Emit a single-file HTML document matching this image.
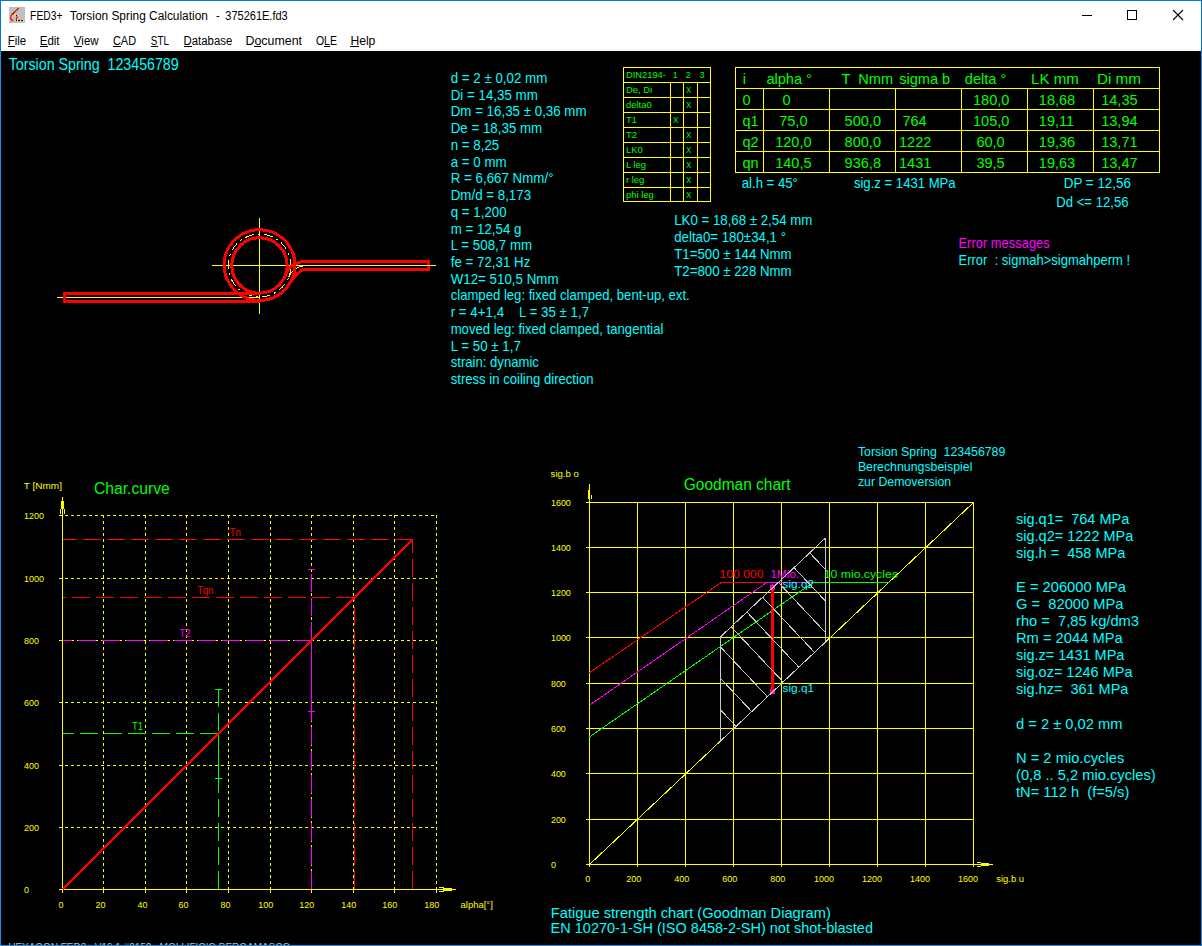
<!DOCTYPE html>
<html lang="en"><head><meta charset="utf-8"><title>FED3+ Torsion Spring Calculation - 375261E.fd3</title>
<style>
html,body{margin:0;padding:0;background:#000;overflow:hidden}
body{width:1202px;height:946px;font-family:"Liberation Sans",sans-serif}
svg{display:block}
text{white-space:pre}
</style></head><body>
<svg width="1202" height="946" viewBox="0 0 1202 946">
<rect x="0" y="0" width="1202" height="946" fill="#1e90ea"/>
<rect x="0" y="0" width="1202" height="51" fill="#0078d7"/>
<rect x="1" y="1" width="1200" height="50" fill="#ffffff"/>
<rect x="1" y="49" width="1200" height="1" fill="#f0f0f0"/>
<rect x="1" y="51" width="1200" height="894" fill="#000000"/>
<g id="appicon">
<rect x="9" y="7" width="16" height="16" fill="#c0c0c0"/>
<path d="M18.8 8 L11.9 14.4 Q10 16.6 10.7 18.6 Q11.7 20.6 13.4 20.5 M16 19.6 Q17.6 17.8 16.9 16.2" fill="none" stroke="#ff0000" stroke-width="1.3"/>
<g shape-rendering="crispEdges"><rect x="13" y="13" width="1" height="1" fill="#000"/><rect x="14" y="14" width="2" height="1" fill="#ffff00"/><rect x="16" y="15" width="1" height="1" fill="#000"/>
<rect x="14" y="20" width="1" height="1" fill="#ffff00"/>
<rect x="15" y="20" width="1" height="1" fill="#ffff00"/>
<rect x="16" y="20" width="1" height="1" fill="#000"/>
<rect x="17" y="20" width="1" height="1" fill="#ffff00"/>
<rect x="18" y="20" width="1" height="1" fill="#000"/>
<rect x="19" y="20" width="1" height="1" fill="#000"/>
<rect x="20" y="20" width="1" height="1" fill="#ffff00"/>
<rect x="21" y="20" width="1" height="1" fill="#000"/>
<rect x="22" y="20" width="1" height="1" fill="#000"/>
<rect x="23" y="20" width="1" height="1" fill="#ffff00"/>
</g>
</g>
<g font-family="'Liberation Sans', sans-serif" fill="#000">
<text x="30.1" y="19.6" font-size="12" textLength="32.30" lengthAdjust="spacingAndGlyphs">FED3+</text>
<text x="69.8" y="19.6" font-size="12" textLength="138.10" lengthAdjust="spacingAndGlyphs">Torsion Spring Calculation</text>
<text x="216" y="19.6" font-size="12" textLength="3.60" lengthAdjust="spacingAndGlyphs">-</text>
<text x="225.3" y="19.6" font-size="12" textLength="62.40" lengthAdjust="spacingAndGlyphs">375261E.fd3</text>
<text x="7.7" y="44.5" font-size="12" textLength="18.40" lengthAdjust="spacingAndGlyphs">File</text>
<rect x="8" y="46" width="7" height="1" fill="#000"/>
<text x="39.7" y="44.5" font-size="12" textLength="19.90" lengthAdjust="spacingAndGlyphs">Edit</text>
<rect x="40" y="46" width="8" height="1" fill="#000"/>
<text x="73.8" y="44.5" font-size="12" textLength="24.90" lengthAdjust="spacingAndGlyphs">View</text>
<rect x="74" y="46" width="8" height="1" fill="#000"/>
<text x="112.9" y="44.5" font-size="12" textLength="23.20" lengthAdjust="spacingAndGlyphs">CAD</text>
<rect x="113" y="46" width="8" height="1" fill="#000"/>
<text x="150.8" y="44.5" font-size="12" textLength="18.10" lengthAdjust="spacingAndGlyphs">STL</text>
<rect x="151" y="46" width="7" height="1" fill="#000"/>
<text x="183.6" y="44.5" font-size="12" textLength="48.60" lengthAdjust="spacingAndGlyphs">Database</text>
<rect x="184" y="46" width="8" height="1" fill="#000"/>
<text x="245.5" y="44.5" font-size="12" textLength="56.50" lengthAdjust="spacingAndGlyphs">Document</text>
<rect x="254" y="46" width="7" height="1" fill="#000"/>
<text x="315.9" y="44.5" font-size="12" textLength="21.10" lengthAdjust="spacingAndGlyphs">OLE</text>
<rect x="324" y="46" width="6" height="1" fill="#000"/>
<text x="350.4" y="44.5" font-size="12" textLength="25.00" lengthAdjust="spacingAndGlyphs">Help</text>
<rect x="350" y="46" width="9" height="1" fill="#000"/>
</g>
<g shape-rendering="crispEdges" stroke="#000" stroke-width="1" fill="none">
<path d="M1082 15.5H1092"/>
<rect x="1127.5" y="10.5" width="9" height="9"/>
</g>
<path d="M1173 10L1183 20M1183 10L1173 20" stroke="#000" stroke-width="1.1" fill="none"/>
<g shape-rendering="crispEdges">
<rect x="623" y="67" width="88" height="1" fill="#ffff00"/>
<rect x="623" y="82" width="88" height="1" fill="#ffff00"/>
<rect x="623" y="97" width="88" height="1" fill="#ffff00"/>
<rect x="623" y="112" width="88" height="1" fill="#ffff00"/>
<rect x="623" y="127" width="88" height="1" fill="#ffff00"/>
<rect x="623" y="142" width="88" height="1" fill="#ffff00"/>
<rect x="623" y="157" width="88" height="1" fill="#ffff00"/>
<rect x="623" y="172" width="88" height="1" fill="#ffff00"/>
<rect x="623" y="187" width="88" height="1" fill="#ffff00"/>
<rect x="623" y="201" width="88" height="1" fill="#ffff00"/>
<rect x="623" y="67" width="1" height="135" fill="#ffff00"/>
<rect x="710" y="67" width="1" height="135" fill="#ffff00"/>
<rect x="670" y="82" width="1" height="120" fill="#ffff00"/>
<rect x="683" y="82" width="1" height="120" fill="#ffff00"/>
<rect x="697" y="82" width="1" height="120" fill="#ffff00"/>
<rect x="735" y="67" width="425" height="1" fill="#ffff00"/>
<rect x="735" y="88" width="425" height="1" fill="#ffff00"/>
<rect x="735" y="109" width="425" height="1" fill="#ffff00"/>
<rect x="735" y="130" width="425" height="1" fill="#ffff00"/>
<rect x="735" y="151" width="425" height="1" fill="#ffff00"/>
<rect x="735" y="172" width="425" height="1" fill="#ffff00"/>
<rect x="735" y="67" width="1" height="106" fill="#ffff00"/>
<rect x="1159" y="67" width="1" height="106" fill="#ffff00"/>
<rect x="763" y="88" width="1" height="85" fill="#ffff00"/>
<rect x="829" y="88" width="1" height="85" fill="#ffff00"/>
<rect x="895" y="88" width="1" height="85" fill="#ffff00"/>
<rect x="961" y="88" width="1" height="85" fill="#ffff00"/>
<rect x="1027" y="88" width="1" height="85" fill="#ffff00"/>
<rect x="1093" y="88" width="1" height="85" fill="#ffff00"/>
<line x1="103.5" y1="515" x2="103.5" y2="889" stroke="#ffff00" stroke-width="1" stroke-dasharray="3 3"/>
<rect x="103" y="890" width="1" height="3" fill="#ffff00"/>
<line x1="145.5" y1="515" x2="145.5" y2="889" stroke="#ffff00" stroke-width="1" stroke-dasharray="3 3"/>
<rect x="145" y="890" width="1" height="3" fill="#ffff00"/>
<line x1="186.5" y1="515" x2="186.5" y2="889" stroke="#ffff00" stroke-width="1" stroke-dasharray="3 3"/>
<rect x="186" y="890" width="1" height="3" fill="#ffff00"/>
<line x1="228.5" y1="515" x2="228.5" y2="889" stroke="#ffff00" stroke-width="1" stroke-dasharray="3 3"/>
<rect x="228" y="890" width="1" height="3" fill="#ffff00"/>
<line x1="270.5" y1="515" x2="270.5" y2="889" stroke="#ffff00" stroke-width="1" stroke-dasharray="3 3"/>
<rect x="270" y="890" width="1" height="3" fill="#ffff00"/>
<line x1="311.5" y1="515" x2="311.5" y2="889" stroke="#ffff00" stroke-width="1" stroke-dasharray="3 3"/>
<rect x="311" y="890" width="1" height="3" fill="#ffff00"/>
<line x1="353.5" y1="515" x2="353.5" y2="889" stroke="#ffff00" stroke-width="1" stroke-dasharray="3 3"/>
<rect x="353" y="890" width="1" height="3" fill="#ffff00"/>
<line x1="394.5" y1="515" x2="394.5" y2="889" stroke="#ffff00" stroke-width="1" stroke-dasharray="3 3"/>
<rect x="394" y="890" width="1" height="3" fill="#ffff00"/>
<line x1="436.5" y1="515" x2="436.5" y2="889" stroke="#ffff00" stroke-width="1" stroke-dasharray="3 3"/>
<rect x="436" y="890" width="1" height="3" fill="#ffff00"/>
<line x1="59" y1="827.5" x2="437" y2="827.5" stroke="#ffff00" stroke-width="1" stroke-dasharray="3 3"/>
<rect x="59" y="827" width="3" height="1" fill="#ffff00"/>
<line x1="59" y1="765.5" x2="437" y2="765.5" stroke="#ffff00" stroke-width="1" stroke-dasharray="3 3"/>
<rect x="59" y="765" width="3" height="1" fill="#ffff00"/>
<line x1="59" y1="702.5" x2="437" y2="702.5" stroke="#ffff00" stroke-width="1" stroke-dasharray="3 3"/>
<rect x="59" y="702" width="3" height="1" fill="#ffff00"/>
<line x1="59" y1="640.5" x2="437" y2="640.5" stroke="#ffff00" stroke-width="1" stroke-dasharray="3 3"/>
<rect x="59" y="640" width="3" height="1" fill="#ffff00"/>
<line x1="59" y1="578.5" x2="437" y2="578.5" stroke="#ffff00" stroke-width="1" stroke-dasharray="3 3"/>
<rect x="59" y="578" width="3" height="1" fill="#ffff00"/>
<line x1="59" y1="515.5" x2="437" y2="515.5" stroke="#ffff00" stroke-width="1" stroke-dasharray="3 3"/>
<rect x="59" y="515" width="3" height="1" fill="#ffff00"/>
<rect x="62" y="497" width="1" height="393" fill="#ffff00"/>
<rect x="59" y="889" width="397" height="1" fill="#ffff00"/>
<rect x="62" y="889" width="1" height="4" fill="#ffff00"/>
<rect x="61" y="501" width="3" height="8" fill="#ffff00"/>
<rect x="60" y="509" width="1" height="5" fill="#ffff00"/>
<rect x="64" y="509" width="1" height="5" fill="#ffff00"/>
<rect x="443" y="888" width="9" height="3" fill="#ffff00"/>
<rect x="439" y="887" width="5" height="1" fill="#ffff00"/>
<rect x="439" y="891" width="5" height="1" fill="#ffff00"/>
</g>
<g shape-rendering="crispEdges">
<line x1="412.813" y1="539.187" x2="63" y2="539.187" stroke="#ff0000" stroke-width="1" stroke-dasharray="18 6"/>
<line x1="412.813" y1="889" x2="412.813" y2="539.187" stroke="#ff0000" stroke-width="1" stroke-dasharray="18 6"/>
<line x1="354.428" y1="597.531" x2="63" y2="597.531" stroke="#ff0000" stroke-width="1" stroke-dasharray="18 6"/>
<line x1="354.5" y1="889" x2="354.5" y2="597.531" stroke="#ff0000" stroke-width="1" stroke-dasharray="18 6"/>
<line x1="311.833" y1="640.167" x2="63" y2="640.167" stroke="#ff00ff" stroke-width="1" stroke-dasharray="18 6"/>
<line x1="311.5" y1="889" x2="311.5" y2="640.167" stroke="#ff00ff" stroke-width="1" stroke-dasharray="18 6"/>
<line x1="311.5" y1="640.167" x2="311.5" y2="569.107" stroke="#ff00ff" stroke-width="1" stroke-dasharray="18 6"/>
<line x1="311.5" y1="640.167" x2="311.5" y2="711.227" stroke="#ff00ff" stroke-width="1" stroke-dasharray="18 6"/>
<rect x="308" y="569" width="7" height="1" fill="#ff00ff"/>
<rect x="308" y="711" width="7" height="1" fill="#ff00ff"/>
<line x1="218.333" y1="733.667" x2="63" y2="733.667" stroke="#00ff00" stroke-width="1" stroke-dasharray="18 6"/>
<line x1="218.5" y1="889" x2="218.5" y2="733.667" stroke="#00ff00" stroke-width="1" stroke-dasharray="18 6"/>
<line x1="218.5" y1="689.4" x2="218.5" y2="778.4" stroke="#00ff00" stroke-width="1" stroke-dasharray="18 6"/>
<rect x="215" y="689" width="7" height="1" fill="#00ff00"/>
<rect x="215" y="778" width="7" height="1" fill="#00ff00"/>
<line x1="62.5" y1="889.5" x2="412.813" y2="539.187" stroke="#ff0000" stroke-width="2.7"/>
</g>
<g shape-rendering="crispEdges">
<rect x="637" y="502" width="1" height="365" fill="#ffff00"/>
<rect x="685" y="502" width="1" height="365" fill="#ffff00"/>
<rect x="733" y="502" width="1" height="365" fill="#ffff00"/>
<rect x="781" y="502" width="1" height="365" fill="#ffff00"/>
<rect x="829" y="502" width="1" height="365" fill="#ffff00"/>
<rect x="877" y="502" width="1" height="365" fill="#ffff00"/>
<rect x="925" y="502" width="1" height="365" fill="#ffff00"/>
<rect x="973" y="502" width="1" height="365" fill="#ffff00"/>
<rect x="586" y="819" width="388" height="1" fill="#ffff00"/>
<rect x="586" y="773" width="388" height="1" fill="#ffff00"/>
<rect x="586" y="728" width="388" height="1" fill="#ffff00"/>
<rect x="586" y="683" width="388" height="1" fill="#ffff00"/>
<rect x="586" y="637" width="388" height="1" fill="#ffff00"/>
<rect x="586" y="592" width="388" height="1" fill="#ffff00"/>
<rect x="586" y="547" width="388" height="1" fill="#ffff00"/>
<rect x="586" y="502" width="388" height="1" fill="#ffff00"/>
<rect x="589" y="484" width="1" height="383" fill="#ffff00"/>
<rect x="586" y="864" width="407" height="1" fill="#ffff00"/>
<rect x="588" y="490" width="2" height="9" fill="#ffff00"/>
<rect x="591" y="495" width="1" height="4" fill="#ffff00"/>
<rect x="981" y="863" width="8" height="3" fill="#ffff00"/>
<rect x="977" y="862" width="4" height="1" fill="#ffff00"/>
<rect x="977" y="866" width="4" height="1" fill="#ffff00"/>
<line x1="589.5" y1="864.5" x2="973.5" y2="502.5" stroke="#ffff00" stroke-width="1"/>
<line x1="589.5" y1="672.7" x2="721" y2="582.592" stroke="#ff0000" stroke-width="1"/>
<line x1="721" y1="582.592" x2="766.6" y2="582.592" stroke="#ff0000" stroke-width="1"/>
<line x1="589.5" y1="705.2" x2="766.6" y2="582.592" stroke="#ff00ff" stroke-width="1"/>
<line x1="766.6" y1="582.592" x2="813" y2="582.592" stroke="#ff00ff" stroke-width="1"/>
<line x1="589.5" y1="736.9" x2="813" y2="582.592" stroke="#00ff00" stroke-width="1"/>
<line x1="813" y1="582.592" x2="888.54" y2="582.592" stroke="#00ff00" stroke-width="1"/>
</g>
<g fill="none" shape-rendering="crispEdges">
<path d="M212 265.5H436 M259.5 218V314" stroke="#ffff00" stroke-width="1"/>
<path d="M57 297.5H259.5" stroke="#ffff00" stroke-width="1"/>
<circle cx="259.5" cy="265.5" r="31.4" stroke="#ffff00" stroke-width="1" stroke-dasharray="9 4 2 4"/>
<path d="M306.2 265.5 A19.0 19.0 0 0 0 288.6 277.3" stroke="#ffff00" stroke-width="1"/>
<g stroke="#ff0000" stroke-width="3" stroke-linejoin="round">
<circle cx="259.5" cy="265.1" r="35.400000000000006"/>
<circle cx="259.5" cy="265.5" r="27.7"/>
<path d="M259.5 293.5H64.5V301.5H259.5"/>
<path d="M285.8 274.1 C288.3 266.5 297.5 261.5 303.6 261.5 H428.5 V269.5 H305 C299 269.5 292.8 278.5 289 284.4"/>
</g>
<path d="M300.2 265.5H436" stroke="#ffff00" stroke-width="1"/>
</g>
<g font-family="'Liberation Sans', sans-serif" style="white-space:pre">
<text x="8.7" y="70" font-size="16.5" fill="#00ffff" textLength="170.01" lengthAdjust="spacingAndGlyphs">Torsion Spring  123456789</text>
<text x="450.7" y="83" font-size="15" fill="#00ffff" textLength="96.63" lengthAdjust="spacingAndGlyphs">d = 2 ± 0,02 mm</text>
<text x="450.7" y="99.73" font-size="15" fill="#00ffff" textLength="87.08" lengthAdjust="spacingAndGlyphs">Di = 14,35 mm</text>
<text x="450.7" y="116.46" font-size="15" fill="#00ffff" textLength="135.91" lengthAdjust="spacingAndGlyphs">Dm = 16,35 ± 0,36 mm</text>
<text x="450.7" y="133.19" font-size="15" fill="#00ffff" textLength="91.54" lengthAdjust="spacingAndGlyphs">De = 18,35 mm</text>
<text x="450.7" y="149.92" font-size="15" fill="#00ffff" textLength="48.57" lengthAdjust="spacingAndGlyphs">n = 8,25</text>
<text x="450.7" y="166.65" font-size="15" fill="#00ffff" textLength="55.95" lengthAdjust="spacingAndGlyphs">a = 0 mm</text>
<text x="450.7" y="183.38" font-size="15" fill="#00ffff" textLength="102.79" lengthAdjust="spacingAndGlyphs">R = 6,667 Nmm/°</text>
<text x="450.7" y="200.11" font-size="15" fill="#00ffff" textLength="80.43" lengthAdjust="spacingAndGlyphs">Dm/d = 8,173</text>
<text x="450.7" y="216.84" font-size="15" fill="#00ffff" textLength="55.98" lengthAdjust="spacingAndGlyphs">q = 1,200</text>
<text x="450.7" y="233.57" font-size="15" fill="#00ffff" textLength="70.80" lengthAdjust="spacingAndGlyphs">m = 12,54 g</text>
<text x="450.7" y="250.3" font-size="15" fill="#00ffff" textLength="81.41" lengthAdjust="spacingAndGlyphs">L = 508,7 mm</text>
<text x="450.7" y="267.03" font-size="15" fill="#00ffff" textLength="79.69" lengthAdjust="spacingAndGlyphs">fe = 72,31 Hz</text>
<text x="450.7" y="283.76" font-size="15" fill="#00ffff" textLength="107.83" lengthAdjust="spacingAndGlyphs">W12= 510,5 Nmm</text>
<text x="450.7" y="300.49" font-size="15" fill="#00ffff" textLength="239.03" lengthAdjust="spacingAndGlyphs">clamped leg: fixed clamped, bent-up, ext.</text>
<text x="450.7" y="317.22" font-size="15" fill="#00ffff" textLength="138.42" lengthAdjust="spacingAndGlyphs">r = 4+1,4    L = 35 ± 1,7</text>
<text x="450.7" y="333.95" font-size="15" fill="#00ffff" textLength="212.80" lengthAdjust="spacingAndGlyphs">moved leg: fixed clamped, tangential</text>
<text x="450.7" y="350.68" font-size="15" fill="#00ffff" textLength="70.22" lengthAdjust="spacingAndGlyphs">L = 50 ± 1,7</text>
<text x="450.7" y="367.41" font-size="15" fill="#00ffff" textLength="88.16" lengthAdjust="spacingAndGlyphs">strain: dynamic</text>
<text x="450.7" y="384.14" font-size="15" fill="#00ffff" textLength="142.82" lengthAdjust="spacingAndGlyphs">stress in coiling direction</text>
<text x="674.2" y="224.7" font-size="15" fill="#00ffff" textLength="138.12" lengthAdjust="spacingAndGlyphs">LK0 = 18,68 ± 2,54 mm</text>
<text x="674.2" y="241.7" font-size="15" fill="#00ffff" textLength="111.75" lengthAdjust="spacingAndGlyphs">delta0= 180±34,1 °</text>
<text x="674.2" y="258.7" font-size="15" fill="#00ffff" textLength="117.46" lengthAdjust="spacingAndGlyphs">T1=500 ± 144 Nmm</text>
<text x="674.2" y="275.7" font-size="15" fill="#00ffff" textLength="117.46" lengthAdjust="spacingAndGlyphs">T2=800 ± 228 Nmm</text>
<text x="741.8" y="187.5" font-size="15" fill="#00ffff" textLength="55.97" lengthAdjust="spacingAndGlyphs">al.h = 45°</text>
<text x="853.9" y="187.5" font-size="15" fill="#00ffff" textLength="101.78" lengthAdjust="spacingAndGlyphs">sig.z = 1431 MPa</text>
<text x="1063.7" y="188" font-size="15" fill="#00ffff" textLength="67.30" lengthAdjust="spacingAndGlyphs">DP = 12,56</text>
<text x="1056.2" y="207" font-size="15" fill="#00ffff" textLength="72.49" lengthAdjust="spacingAndGlyphs">Dd &lt;= 12,56</text>
<text x="958.5" y="248" font-size="15" fill="#ff00ff" textLength="91.26" lengthAdjust="spacingAndGlyphs">Error messages</text>
<text x="958.5" y="264.8" font-size="15" fill="#00ffff" textLength="171.65" lengthAdjust="spacingAndGlyphs">Error  : sigmah&gt;sigmahperm !</text>
<text x="626" y="77.8" font-size="9.6" fill="#00ff00" textLength="39.85" lengthAdjust="spacingAndGlyphs">DIN2194-</text>
<text x="672.8" y="77.8" font-size="9.6" fill="#00ff00" textLength="4.81" lengthAdjust="spacingAndGlyphs">1</text>
<text x="685.7" y="77.8" font-size="9.6" fill="#00ff00" textLength="4.81" lengthAdjust="spacingAndGlyphs">2</text>
<text x="699.7" y="77.8" font-size="9.6" fill="#00ff00" textLength="4.81" lengthAdjust="spacingAndGlyphs">3</text>
<text x="626" y="92.8" font-size="9.6" fill="#00ff00" textLength="26.14" lengthAdjust="spacingAndGlyphs">De, Di</text>
<text x="685.9" y="92.8" font-size="9.9" fill="#00ff00" textLength="5.28" lengthAdjust="spacingAndGlyphs">X</text>
<text x="626" y="107.8" font-size="9.6" fill="#00ff00" textLength="25.63" lengthAdjust="spacingAndGlyphs">delta0</text>
<text x="685.9" y="107.8" font-size="9.9" fill="#00ff00" textLength="5.28" lengthAdjust="spacingAndGlyphs">X</text>
<text x="626" y="122.8" font-size="9.6" fill="#00ff00" textLength="10.98" lengthAdjust="spacingAndGlyphs">T1</text>
<text x="672.9" y="122.8" font-size="9.9" fill="#00ff00" textLength="5.28" lengthAdjust="spacingAndGlyphs">X</text>
<text x="626" y="137.8" font-size="9.6" fill="#00ff00" textLength="10.98" lengthAdjust="spacingAndGlyphs">T2</text>
<text x="685.9" y="137.8" font-size="9.9" fill="#00ff00" textLength="5.28" lengthAdjust="spacingAndGlyphs">X</text>
<text x="626" y="152.8" font-size="9.6" fill="#00ff00" textLength="16.74" lengthAdjust="spacingAndGlyphs">LK0</text>
<text x="685.9" y="152.8" font-size="9.9" fill="#00ff00" textLength="5.28" lengthAdjust="spacingAndGlyphs">X</text>
<text x="626" y="167.8" font-size="9.6" fill="#00ff00" textLength="20.05" lengthAdjust="spacingAndGlyphs">L leg</text>
<text x="685.9" y="167.8" font-size="9.9" fill="#00ff00" textLength="5.28" lengthAdjust="spacingAndGlyphs">X</text>
<text x="626" y="182.8" font-size="9.6" fill="#00ff00" textLength="18.30" lengthAdjust="spacingAndGlyphs">r leg</text>
<text x="685.9" y="182.8" font-size="9.9" fill="#00ff00" textLength="5.28" lengthAdjust="spacingAndGlyphs">X</text>
<text x="626" y="197.8" font-size="9.6" fill="#00ff00" textLength="27.72" lengthAdjust="spacingAndGlyphs">phi leg</text>
<text x="685.9" y="197.8" font-size="9.9" fill="#00ff00" textLength="5.28" lengthAdjust="spacingAndGlyphs">X</text>
<text x="742.8" y="84" font-size="15" fill="#00ff00" textLength="3.23" lengthAdjust="spacingAndGlyphs">i</text>
<text x="766.4" y="84" font-size="15" fill="#00ff00" textLength="45.46" lengthAdjust="spacingAndGlyphs">alpha °</text>
<text x="841.6" y="84" font-size="15" fill="#00ff00" textLength="51.46" lengthAdjust="spacingAndGlyphs">T  Nmm</text>
<text x="899.2" y="84" font-size="15" fill="#00ff00" textLength="50.95" lengthAdjust="spacingAndGlyphs">sigma b</text>
<text x="964.8" y="84" font-size="15" fill="#00ff00" textLength="41.41" lengthAdjust="spacingAndGlyphs">delta °</text>
<text x="1031" y="84" font-size="15" fill="#00ff00" textLength="47.98" lengthAdjust="spacingAndGlyphs">LK mm</text>
<text x="1096.9" y="84" font-size="15" fill="#00ff00" textLength="44.19" lengthAdjust="spacingAndGlyphs">Di mm</text>
<text x="742.4" y="105" font-size="15" fill="#00ff00" textLength="8.09" lengthAdjust="spacingAndGlyphs">0</text>
<text x="782.4" y="105" font-size="15" fill="#00ff00" textLength="8.09" lengthAdjust="spacingAndGlyphs">0</text>
<text x="973" y="105" font-size="15" fill="#00ff00" textLength="36.41" lengthAdjust="spacingAndGlyphs">180,0</text>
<text x="1038.8" y="105" font-size="15" fill="#00ff00" textLength="36.41" lengthAdjust="spacingAndGlyphs">18,68</text>
<text x="1101.2" y="105" font-size="15" fill="#00ff00" textLength="36.41" lengthAdjust="spacingAndGlyphs">14,35</text>
<text x="742.4" y="125.9" font-size="15" fill="#00ff00" textLength="16.18" lengthAdjust="spacingAndGlyphs">q1</text>
<text x="779.2" y="125.9" font-size="15" fill="#00ff00" textLength="28.32" lengthAdjust="spacingAndGlyphs">75,0</text>
<text x="844.6" y="125.9" font-size="15" fill="#00ff00" textLength="36.41" lengthAdjust="spacingAndGlyphs">500,0</text>
<text x="902.4" y="125.9" font-size="15" fill="#00ff00" textLength="24.28" lengthAdjust="spacingAndGlyphs">764</text>
<text x="973" y="125.9" font-size="15" fill="#00ff00" textLength="36.41" lengthAdjust="spacingAndGlyphs">105,0</text>
<text x="1038.8" y="125.9" font-size="15" fill="#00ff00" textLength="35.33" lengthAdjust="spacingAndGlyphs">19,11</text>
<text x="1101.2" y="125.9" font-size="15" fill="#00ff00" textLength="36.41" lengthAdjust="spacingAndGlyphs">13,94</text>
<text x="742.4" y="146.8" font-size="15" fill="#00ff00" textLength="16.18" lengthAdjust="spacingAndGlyphs">q2</text>
<text x="775.2" y="146.8" font-size="15" fill="#00ff00" textLength="36.41" lengthAdjust="spacingAndGlyphs">120,0</text>
<text x="844.6" y="146.8" font-size="15" fill="#00ff00" textLength="36.41" lengthAdjust="spacingAndGlyphs">800,0</text>
<text x="899" y="146.8" font-size="15" fill="#00ff00" textLength="32.37" lengthAdjust="spacingAndGlyphs">1222</text>
<text x="976.4" y="146.8" font-size="15" fill="#00ff00" textLength="28.32" lengthAdjust="spacingAndGlyphs">60,0</text>
<text x="1038.8" y="146.8" font-size="15" fill="#00ff00" textLength="36.41" lengthAdjust="spacingAndGlyphs">19,36</text>
<text x="1101.2" y="146.8" font-size="15" fill="#00ff00" textLength="36.41" lengthAdjust="spacingAndGlyphs">13,71</text>
<text x="742.4" y="167.7" font-size="15" fill="#00ff00" textLength="16.18" lengthAdjust="spacingAndGlyphs">qn</text>
<text x="775.2" y="167.7" font-size="15" fill="#00ff00" textLength="36.41" lengthAdjust="spacingAndGlyphs">140,5</text>
<text x="844.6" y="167.7" font-size="15" fill="#00ff00" textLength="36.41" lengthAdjust="spacingAndGlyphs">936,8</text>
<text x="899" y="167.7" font-size="15" fill="#00ff00" textLength="32.37" lengthAdjust="spacingAndGlyphs">1431</text>
<text x="976.4" y="167.7" font-size="15" fill="#00ff00" textLength="28.32" lengthAdjust="spacingAndGlyphs">39,5</text>
<text x="1038.8" y="167.7" font-size="15" fill="#00ff00" textLength="36.41" lengthAdjust="spacingAndGlyphs">19,63</text>
<text x="1101.2" y="167.7" font-size="15" fill="#00ff00" textLength="36.41" lengthAdjust="spacingAndGlyphs">13,47</text>
<text x="94" y="493.8" font-size="16" fill="#00ff00" textLength="75.82" lengthAdjust="spacingAndGlyphs">Char.curve</text>
<text x="683.8" y="489.5" font-size="16" fill="#00ff00" textLength="106.64" lengthAdjust="spacingAndGlyphs">Goodman chart</text>
<text x="857.9" y="455.7" font-size="12" fill="#00ffff" textLength="147.45" lengthAdjust="spacingAndGlyphs">Torsion Spring  123456789</text>
<text x="857.9" y="470.7" font-size="12" fill="#00ffff" textLength="114.53" lengthAdjust="spacingAndGlyphs">Berechnungsbeispiel</text>
<text x="857.9" y="485.7" font-size="12" fill="#00ffff" textLength="93.24" lengthAdjust="spacingAndGlyphs">zur Demoversion</text>
<text x="1016" y="523.8" font-size="14.5" fill="#00ffff">sig.q1=  764 MPa</text>
<text x="1016" y="540.86" font-size="14.5" fill="#00ffff">sig.q2= 1222 MPa</text>
<text x="1016" y="557.92" font-size="14.5" fill="#00ffff">sig.h =  458 MPa</text>
<text x="1016" y="592.04" font-size="14.5" fill="#00ffff" textLength="109.94" lengthAdjust="spacingAndGlyphs">E = 206000 MPa</text>
<text x="1016" y="609.1" font-size="14.5" fill="#00ffff" textLength="107.48" lengthAdjust="spacingAndGlyphs">G =  82000 MPa</text>
<text x="1016" y="626.16" font-size="14.5" fill="#00ffff" textLength="123.01" lengthAdjust="spacingAndGlyphs">rho =  7,85 kg/dm3</text>
<text x="1016" y="643.22" font-size="14.5" fill="#00ffff" textLength="106.65" lengthAdjust="spacingAndGlyphs">Rm = 2044 MPa</text>
<text x="1016" y="660.28" font-size="14.5" fill="#00ffff">sig.z= 1431 MPa</text>
<text x="1016" y="677.34" font-size="14.5" fill="#00ffff">sig.oz= 1246 MPa</text>
<text x="1016" y="694.4" font-size="14.5" fill="#00ffff">sig.hz=  361 MPa</text>
<text x="1016" y="728.52" font-size="14.5" fill="#00ffff" textLength="106.55" lengthAdjust="spacingAndGlyphs">d = 2 ± 0,02 mm</text>
<text x="1016" y="762.64" font-size="14.5" fill="#00ffff" textLength="108.26" lengthAdjust="spacingAndGlyphs">N = 2 mio.cycles</text>
<text x="1016" y="779.7" font-size="14.5" fill="#00ffff" textLength="139.72" lengthAdjust="spacingAndGlyphs">(0,8 .. 5,2 mio.cycles)</text>
<text x="1016" y="796.76" font-size="14.5" fill="#00ffff" textLength="113.32" lengthAdjust="spacingAndGlyphs">tN= 112 h  (f=5/s)</text>
<text x="550.8" y="917.7" font-size="14.5" fill="#00ffff" textLength="280.01" lengthAdjust="spacingAndGlyphs">Fatigue strength chart (Goodman Diagram)</text>
<text x="550.6" y="932.9" font-size="14.5" fill="#00ffff">EN 10270-1-SH (ISO 8458-2-SH) not shot-blasted</text>
<clipPath id="cv"><rect x="1" y="51" width="1200" height="894"/></clipPath>
<text x="8.2" y="950.9" font-size="11" fill="#c0c0c0" textLength="282.00" lengthAdjust="spacingAndGlyphs" clip-path="url(#cv)">HEXAGON FED3+ V19.1 #2152   MOLLIFICIO BERGAMASCO</text>
<text x="23.8" y="489.2" font-size="9.3" fill="#ffff00" textLength="38.14" lengthAdjust="spacingAndGlyphs">T [Nmm]</text>
<text x="24" y="518.6" font-size="9.6" fill="#ffff00" textLength="19.97" lengthAdjust="spacingAndGlyphs">1200</text>
<text x="24" y="581.6" font-size="9.6" fill="#ffff00" textLength="19.97" lengthAdjust="spacingAndGlyphs">1000</text>
<text x="24" y="643.6" font-size="9.6" fill="#ffff00" textLength="14.98" lengthAdjust="spacingAndGlyphs">800</text>
<text x="24" y="705.6" font-size="9.6" fill="#ffff00" textLength="14.98" lengthAdjust="spacingAndGlyphs">600</text>
<text x="24" y="768.6" font-size="9.6" fill="#ffff00" textLength="14.98" lengthAdjust="spacingAndGlyphs">400</text>
<text x="24" y="830.6" font-size="9.6" fill="#ffff00" textLength="14.98" lengthAdjust="spacingAndGlyphs">200</text>
<text x="24" y="892.6" font-size="9.6" fill="#ffff00" textLength="4.99" lengthAdjust="spacingAndGlyphs">0</text>
<text x="58.6" y="908" font-size="9.6" fill="#ffff00" textLength="4.99" lengthAdjust="spacingAndGlyphs">0</text>
<text x="95.6" y="908" font-size="9.6" fill="#ffff00" textLength="9.98" lengthAdjust="spacingAndGlyphs">20</text>
<text x="137.6" y="908" font-size="9.6" fill="#ffff00" textLength="9.98" lengthAdjust="spacingAndGlyphs">40</text>
<text x="178.6" y="908" font-size="9.6" fill="#ffff00" textLength="9.98" lengthAdjust="spacingAndGlyphs">60</text>
<text x="220.6" y="908" font-size="9.6" fill="#ffff00" textLength="9.98" lengthAdjust="spacingAndGlyphs">80</text>
<text x="258.3" y="908" font-size="9.6" fill="#ffff00" textLength="14.98" lengthAdjust="spacingAndGlyphs">100</text>
<text x="299.3" y="908" font-size="9.6" fill="#ffff00" textLength="14.98" lengthAdjust="spacingAndGlyphs">120</text>
<text x="341.3" y="908" font-size="9.6" fill="#ffff00" textLength="14.98" lengthAdjust="spacingAndGlyphs">140</text>
<text x="382.3" y="908" font-size="9.6" fill="#ffff00" textLength="14.98" lengthAdjust="spacingAndGlyphs">160</text>
<text x="424.3" y="908" font-size="9.6" fill="#ffff00" textLength="14.98" lengthAdjust="spacingAndGlyphs">180</text>
<text x="460.5" y="908" font-size="9.3" fill="#ffff00" textLength="32.27" lengthAdjust="spacingAndGlyphs">alpha[°]</text>
<text x="229.8" y="535.8" font-size="10" fill="#ff0000" textLength="11.09" lengthAdjust="spacingAndGlyphs">Tn</text>
<text x="197.3" y="593.5" font-size="10" fill="#ff0000" textLength="16.03" lengthAdjust="spacingAndGlyphs">Tqn</text>
<text x="179.4" y="637.1" font-size="10" fill="#ff00ff" textLength="11.09" lengthAdjust="spacingAndGlyphs">T2</text>
<text x="132" y="730" font-size="10" fill="#00ff00" textLength="11.09" lengthAdjust="spacingAndGlyphs">T1</text>
<text x="550.6" y="476.6" font-size="9.2" fill="#ffff00" textLength="28.19" lengthAdjust="spacingAndGlyphs">sig.b o</text>
<text x="550.9" y="505.6" font-size="9.6" fill="#ffff00" textLength="19.97" lengthAdjust="spacingAndGlyphs">1600</text>
<text x="550.9" y="550.6" font-size="9.6" fill="#ffff00" textLength="19.97" lengthAdjust="spacingAndGlyphs">1400</text>
<text x="550.9" y="595.6" font-size="9.6" fill="#ffff00" textLength="19.97" lengthAdjust="spacingAndGlyphs">1200</text>
<text x="550.9" y="640.6" font-size="9.6" fill="#ffff00" textLength="19.97" lengthAdjust="spacingAndGlyphs">1000</text>
<text x="550.9" y="686.6" font-size="9.6" fill="#ffff00" textLength="14.98" lengthAdjust="spacingAndGlyphs">800</text>
<text x="550.9" y="731.6" font-size="9.6" fill="#ffff00" textLength="14.98" lengthAdjust="spacingAndGlyphs">600</text>
<text x="550.9" y="776.6" font-size="9.6" fill="#ffff00" textLength="14.98" lengthAdjust="spacingAndGlyphs">400</text>
<text x="550.9" y="822.6" font-size="9.6" fill="#ffff00" textLength="14.98" lengthAdjust="spacingAndGlyphs">200</text>
<text x="550.9" y="867.6" font-size="9.6" fill="#ffff00" textLength="4.99" lengthAdjust="spacingAndGlyphs">0</text>
<text x="585.3" y="881.8" font-size="9.6" fill="#ffff00" textLength="4.99" lengthAdjust="spacingAndGlyphs">0</text>
<text x="626.2" y="881.8" font-size="9.6" fill="#ffff00" textLength="14.98" lengthAdjust="spacingAndGlyphs">200</text>
<text x="674.2" y="881.8" font-size="9.6" fill="#ffff00" textLength="14.98" lengthAdjust="spacingAndGlyphs">400</text>
<text x="722.2" y="881.8" font-size="9.6" fill="#ffff00" textLength="14.98" lengthAdjust="spacingAndGlyphs">600</text>
<text x="770.2" y="881.8" font-size="9.6" fill="#ffff00" textLength="14.98" lengthAdjust="spacingAndGlyphs">800</text>
<text x="814.05" y="881.8" font-size="9.6" fill="#ffff00" textLength="19.97" lengthAdjust="spacingAndGlyphs">1000</text>
<text x="862.05" y="881.8" font-size="9.6" fill="#ffff00" textLength="19.97" lengthAdjust="spacingAndGlyphs">1200</text>
<text x="910.05" y="881.8" font-size="9.6" fill="#ffff00" textLength="19.97" lengthAdjust="spacingAndGlyphs">1400</text>
<text x="958.05" y="881.8" font-size="9.6" fill="#ffff00" textLength="19.97" lengthAdjust="spacingAndGlyphs">1600</text>
<text x="996.3" y="881.7" font-size="9.2" fill="#ffff00" textLength="27.65" lengthAdjust="spacingAndGlyphs">sig.b u</text>
<text x="719.4" y="577.9" font-size="10.8" fill="#ff0000" textLength="44.11" lengthAdjust="spacingAndGlyphs">100 000</text>
<text x="770.6" y="577.9" font-size="10.8" fill="#ff00ff" textLength="28.52" lengthAdjust="spacingAndGlyphs">1Mio.</text>
<text x="823.8" y="577.9" font-size="10.8" fill="#00ff00" textLength="74.00" lengthAdjust="spacingAndGlyphs">10 mio.cycles</text>
<text x="782.6" y="587.6" font-size="10.8" fill="#00ffff" textLength="31.41" lengthAdjust="spacingAndGlyphs">sig.q2</text>
<text x="782.6" y="692" font-size="10.8" fill="#00ffff" textLength="31.41" lengthAdjust="spacingAndGlyphs">sig.q1</text>
</g>
<g shape-rendering="crispEdges">
<rect x="770.5" y="585.5" width="4" height="4" fill="none" stroke="#ff00ff"/><rect x="772" y="584" width="1" height="1" fill="#ff00ff"/>
<rect x="770.5" y="689.5" width="4" height="4" fill="none" stroke="#ff00ff"/>
<rect x="771" y="586" width="3" height="107" fill="#ff0000"/>
<line x1="720.5" y1="741.006" x2="720.5" y2="636.906" stroke="#c8c8c8" stroke-width="1"/>
<line x1="720.5" y1="636.906" x2="825.5" y2="537.923" stroke="#c8c8c8" stroke-width="1"/>
<line x1="825.5" y1="537.923" x2="825.5" y2="642.023" stroke="#c8c8c8" stroke-width="1"/>
<line x1="720.5" y1="741.006" x2="825.5" y2="642.023" stroke="#c8c8c8" stroke-width="1"/>
<line x1="720.5" y1="709.898" x2="736.05" y2="726.421" stroke="#c8c8c8" stroke-width="1"/>
<line x1="720.5" y1="678.415" x2="751.75" y2="711.62" stroke="#c8c8c8" stroke-width="1"/>
<line x1="720.5" y1="646.933" x2="767.45" y2="696.82" stroke="#c8c8c8" stroke-width="1"/>
<line x1="731.2" y1="626.819" x2="783.15" y2="682.019" stroke="#c8c8c8" stroke-width="1"/>
<line x1="746.9" y1="612.019" x2="798.85" y2="667.219" stroke="#c8c8c8" stroke-width="1"/>
<line x1="762.6" y1="597.219" x2="814.55" y2="652.419" stroke="#c8c8c8" stroke-width="1"/>
<line x1="778.3" y1="582.418" x2="825.5" y2="632.571" stroke="#c8c8c8" stroke-width="1"/>
<line x1="794" y1="567.618" x2="825.5" y2="601.088" stroke="#c8c8c8" stroke-width="1"/>
<line x1="809.7" y1="552.817" x2="825.5" y2="569.606" stroke="#c8c8c8" stroke-width="1"/>
</g>
</svg>
</body></html>
